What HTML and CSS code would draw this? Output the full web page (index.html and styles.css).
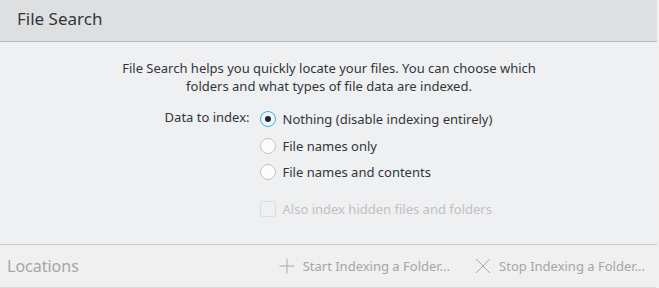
FILE: index.html
```html
<!DOCTYPE html>
<html lang="en">
<head>
    <meta charset="UTF-8">
    <title>File Search</title>
    <link rel="stylesheet" href="styles.css">
</head>
<body>
    <div class="page">
        <div class="header">
            <h1>File Search</h1>
        </div>

        <div class="content">
            <p class="intro">File Search helps you quickly locate your files. You can choose which<br>folders and what types of file data are indexed.</p>

            <div class="form">
                <span class="label">Data to index:</span>
                <div class="choices">
                    <label class="option"><span class="radio checked"></span>Nothing (disable indexing entirely)</label>
                    <label class="option"><span class="radio"></span>File names only</label>
                    <label class="option"><span class="radio"></span>File names and contents</label>
                    <label class="option disabled hidden-files"><span class="check"></span>Also index hidden files and folders</label>
                </div>
            </div>
        </div>

        <div class="footer">
            <span class="footer-title">Locations</span>
            <div class="actions">
                <span class="action">
                    <svg width="16" height="16" viewBox="0 0 16 16"><path d="M8 0.5V15.5M0.5 8H15.5" stroke="#a9abad" stroke-width="1" fill="none"/></svg>
                    Start Indexing a Folder...
                </span>
                <span class="action">
                    <svg width="16" height="16" viewBox="0 0 16 16"><path d="M1 1L15 15M15 1L1 15" stroke="#a9abad" stroke-width="1" fill="none"/></svg>
                    Stop Indexing a Folder...
                </span>
            </div>
        </div>
    </div>
</body>
</html>
```

FILE: styles.css
```css
* {
    margin: 0;
    padding: 0;
    box-sizing: border-box;
}

body {
    font-family: 'Noto Sans', sans-serif;
    font-size: 13px;
    color: #31363b;
    background-color: #eff0f1;
    width: 659px;
    height: 288px;
    overflow: hidden;
}

.page {
    display: flex;
    flex-direction: column;
    height: 288px;
    border-right: 2px solid #f0f0f1;
}

/* Header */
.header {
    height: 42px;
    background-color: #dedfe0;
    border-bottom: 1px solid #b8b9ba;
    display: flex;
    align-items: center;
    padding-left: 17px;
}

.header h1 {
    font-size: 17px;
    font-weight: normal;
    color: #31363b;
    margin-top: -4px;
}

/* Content */
.content {
    flex: 1;
    padding-top: 17px;
}

.intro {
    text-align: center;
    line-height: 18px;
    margin-left: 1px;
}

.form {
    display: flex;
    justify-content: center;
    margin-top: 11px;
}

.label {
    line-height: 18px;
    margin-top: 2px;
    margin-right: 10px;
}

.choices {
    display: flex;
    flex-direction: column;
}

.option {
    display: flex;
    align-items: center;
    height: 26.5px;
    line-height: 18px;
}

.radio,
.check {
    width: 16px;
    height: 16px;
    border-radius: 50%;
    border: 1px solid #c2c3c5;
    background-color: #fcfcfc;
    margin-right: 7px;
    flex-shrink: 0;
    display: flex;
    align-items: center;
    justify-content: center;
}

.radio.checked {
    border-color: #3daee9;
    background-color: #eef6fb;
}

.radio.checked::after {
    content: "";
    width: 6px;
    height: 6px;
    border-radius: 50%;
    background-color: #232629;
}

.check {
    border-radius: 3px;
    border-color: #dcdddf;
    background-color: #eff0f1;
}

.disabled {
    color: #bfc1c3;
}

.hidden-files {
    margin-top: 10px;
}

/* Footer */
.footer {
    height: 44px;
    border-top: 1px solid #c8c9ca;
    border-bottom: 1px solid #dcdcdc;
    background-color: #f0f0f0;
    display: flex;
    align-items: center;
    justify-content: space-between;
    padding: 0 12px 0 7px;
}

.footer-title {
    font-size: 16px;
    color: #a4a6a8;
}

.actions {
    display: flex;
    gap: 25px;
}

.action {
    display: flex;
    align-items: center;
    gap: 8px;
    color: #a4a6a8;
}
```
